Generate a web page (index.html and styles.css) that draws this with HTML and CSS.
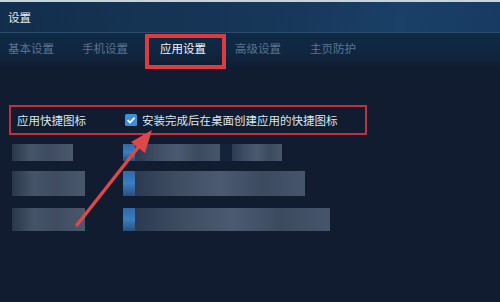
FILE: index.html
```html
<!DOCTYPE html>
<html lang="zh">
<head>
<meta charset="utf-8">
<link rel="stylesheet" href="styles.css">
</head>
<body>
<div class="win">
  <div class="titlebar">设置</div>
  <div class="tabs">
    <span class="tab t1">基本设置</span>
    <span class="tab t2">手机设置</span>
    <span class="tab active">应用设置</span>
    <span class="tab t4">高级设置</span>
    <span class="tab t5">主页防护</span>
  </div>
  <div class="content">
    <div class="row hl">
      <span class="label">应用快捷图标</span>
      <span class="check"><svg width="12" height="12" viewBox="0 0 12 12"><rect width="12" height="12" rx="1.5" fill="#3d8fdc"/><path d="M2.6 6.2 L5 8.6 L9.6 3.6" fill="none" stroke="#fff" stroke-width="1.7"/></svg></span>
      <span class="ctext">安装完成后在桌面创建应用的快捷图标</span>
    </div>
    <div class="brow r1">
      <div class="bl w61"></div>
      <div class="br"><i class="blue"></i><i class="g w85"></i><i class="gap"></i><i class="g w50"></i></div>
    </div>
    <div class="brow r2">
      <div class="bl w73"></div>
      <div class="br"><i class="blue"></i><i class="g w170"></i></div>
    </div>
    <div class="brow r3">
      <div class="bl w73"></div>
      <div class="br"><i class="blue"></i><i class="g w195"></i></div>
    </div>
  </div>
  <svg class="arrow" width="500" height="302" viewBox="0 0 500 302">
    <line x1="77" y1="225" x2="140" y2="145" stroke="#e04848" stroke-width="3.4" stroke-linecap="round"/>
    <polygon points="152,130 131,142 145,153" fill="#e04848"/>
  </svg>
</div>
</body>
</html>
```
FILE: styles.css
```css
html, body {
  margin: 0;
  padding: 0;
  background: #111c30;
}
.win {
  position: relative;
  width: 500px;
  height: 302px;
  overflow: hidden;
  font-family: "Noto Sans CJK SC", "Noto Sans", sans-serif;
  font-size: 11.5px;
  background: #111c30;
  border-top: 2px solid #c9d3dc;
  box-sizing: border-box;
}
.titlebar {
  height: 30px;
  line-height: 30px;
  padding-left: 8px;
  color: #e6edf4;
  background: linear-gradient(100deg, #132e4c 0%, #17385a 60%, #1a4068 80%, #173a62 100%);
  border-bottom: 1px solid #2b4d6d;
}
.tabs {
  height: 34px;
  display: flex;
  align-items: center;
  padding-left: 8px;
  background: linear-gradient(180deg, #0f2a46 0%, #102640 60%, #111d32 100%);
  position: relative;
}
.tab {
  color: #5a748e;
  white-space: nowrap;
  margin-top: -4px;
}
.t1 { width: 74px; }
.t2 { width: 78px; }
.active {
  color: #f2f6fa;
  width: 75px;
  position: relative;
}
.active::before {
  content: "";
  position: absolute;
  left: -15px;
  top: -6px;
  width: 73px;
  height: 27px;
  border: 4px solid #dc3b3f;
}
.t4 { width: 75px; }
.t5 { width: 60px; }
.content {
  padding: 38px 0 0 9px;
}
.row.hl {
  width: 354px;
  height: 26px;
  border: 2px solid #c3303d;
  display: flex;
  align-items: center;
  color: #dfe6ee;
}
.label {
  padding-left: 6px;
  width: 108px;
}
.check {
  display: flex;
  width: 17px;
}
.brow {
  display: flex;
}
.r1 { height: 17px; margin-top: 9px; }
.r2 { height: 25px; margin-top: 10px; }
.r3 { height: 23px; margin-top: 12px; }
.bl {
  margin-left: 3px;
  height: 100%;
  background: linear-gradient(90deg, #2a374a 0%, #46546a 30%, #3e4b60 60%, #4a586d 100%);
}
.w61 { width: 61px; }
.w73 { width: 73px; }
.br {
  display: flex;
  height: 100%;
}
.r1 .br { margin-left: 50px; }
.r2 .br, .r3 .br { margin-left: 38px; }
.br i { display: block; height: 100%; }
.blue { width: 12px; background: linear-gradient(180deg, #2f6aa6, #3a7dc0 50%, #2a4f7a); }
.g { background: linear-gradient(90deg, #2b3a51 0%, #3f4d63 25%, #4b5a70 50%, #3b4a5f 75%, #46556b 100%); }
.gap { width: 12px; background: #16223a; }
.w85 { width: 85px; }
.w50 { width: 50px; }
.w170 { width: 170px; }
.w195 { width: 195px; }
.arrow {
  position: absolute;
  left: 0;
  top: -2px;
  pointer-events: none;
}
```
